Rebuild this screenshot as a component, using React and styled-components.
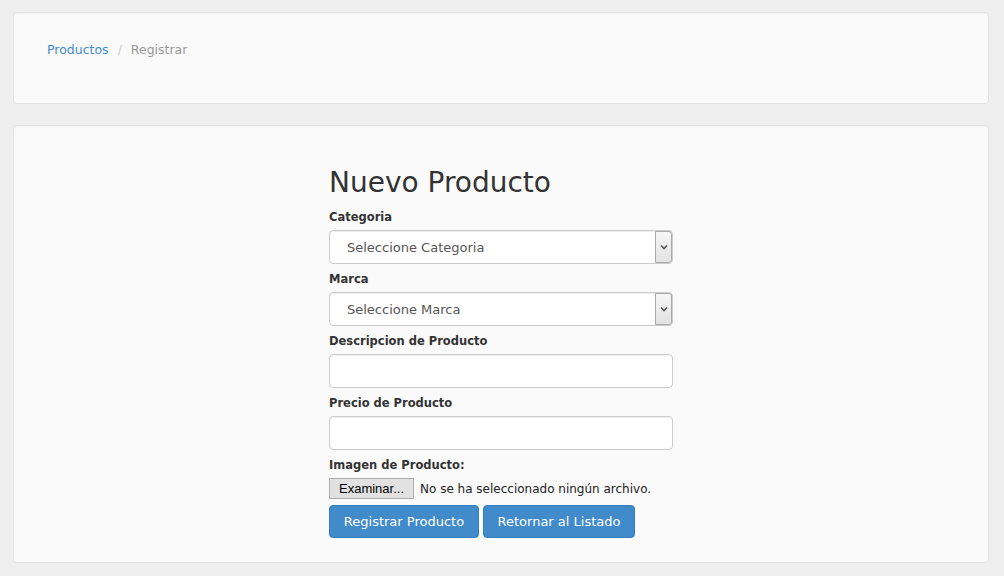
import React from "react";
import styled, { createGlobalStyle } from "styled-components";

const GlobalStyle = createGlobalStyle`
  html, body {
    margin: 0;
    padding: 0;
    background: #efefef;
  }
  body {
    font-family: "Comic Sans MS", "DejaVu Sans", sans-serif;
    font-size: 14px;
    color: #333;
  }
  * { box-sizing: border-box; }
`;

const Page = styled.div`
  padding: 12px 15px 12px 13px;
  display: flex;
  flex-direction: column;
  gap: 21px;
`;

const Well = styled.div`
  background: #fafafa;
  border: 1px solid #e3e3e3;
  border-radius: 4px;
  box-shadow: inset 0 1px 1px rgba(0, 0, 0, 0.03);
  padding: ${(p) => p.$pad};
`;

const Breadcrumb = styled.ol`
  list-style: none;
  margin: 0;
  padding: 0 14px;
  display: flex;
  line-height: 20px;
  font-size: 12.5px;
`;

const Crumb = styled.li`
  color: ${(p) => (p.$active ? "#999" : "#428bca")};
  &:not(:first-child)::before {
    content: "/";
    color: #ccc;
    padding: 0 9px 0 9px;
  }
`;

const FormColumn = styled.form`
  width: 344px;
  margin: 0 auto;
`;

const Heading = styled.h1`
  font-size: 28px;
  font-weight: 400;
  line-height: 34px;
  margin: 0 0 7px;
  color: #333;
`;

const Group = styled.div`
  margin-bottom: 5px;
`;

const Label = styled.label`
  display: block;
  font-weight: 700;
  font-size: 11.5px;
  line-height: 20px;
  margin-bottom: 3px;
  color: #333;
`;

const SelectWrap = styled.div`
  position: relative;
  height: 34px;
`;

const Select = styled.select`
  appearance: none;
  width: 100%;
  height: 34px;
  padding: 0 30px 0 17px;
  font-family: inherit;
  font-size: 13px;
  color: #555;
  background: #fff;
  border: 1px solid #ccc;
  border-radius: 4px;
  box-shadow: inset 0 1px 1px rgba(0, 0, 0, 0.075);
`;

const Arrow = styled.span`
  position: absolute;
  top: 1px;
  right: 1px;
  width: 17px;
  height: 32px;
  border: 1px solid #a9a9a9;
  border-radius: 0 3px 3px 0;
  background: linear-gradient(#f6f6f6, #e2e2e2);
  display: flex;
  align-items: center;
  justify-content: center;
  pointer-events: none;
`;

const Input = styled.input`
  width: 100%;
  height: 34px;
  padding: 6px 12px;
  font-family: inherit;
  font-size: 13px;
  color: #555;
  background: #fff;
  border: 1px solid #ccc;
  border-radius: 4px;
  box-shadow: inset 0 1px 1px rgba(0, 0, 0, 0.075);
`;

const FileRow = styled.div`
  display: flex;
  align-items: center;
  gap: 6px;
  height: 21px;
  margin-bottom: 6px;
`;

const FileButton = styled.span`
  display: inline-flex;
  align-items: center;
  justify-content: center;
  width: 85px;
  height: 21px;
  border: 1px solid #adadad;
  background: #e1e1e1;
  font-family: "Liberation Sans", Arial, sans-serif;
  font-size: 13px;
  color: #000;
`;

const FileText = styled.span`
  font-size: 12px;
  color: #222;
`;

const Actions = styled.div`
  display: flex;
  gap: 4px;
`;

const Button = styled.button`
  height: 33px;
  padding: 0 10px;
  font-family: inherit;
  font-size: 13px;
  color: #fff;
  background: #428bca;
  border: 1px solid #357ebd;
  border-radius: 4px;
  width: ${(p) => p.$w}px;
`;

function Chevron() {
  return (
    <svg width="8" height="6" viewBox="0 0 8 6">
      <path d="M1 1.5 L4 4.5 L7 1.5" fill="none" stroke="#555" strokeWidth="1.6" />
    </svg>
  );
}

function SelectField({ label, placeholder }) {
  return (
    <Group>
      <Label>{label}</Label>
      <SelectWrap>
        <Select defaultValue="">
          <option value="">{placeholder}</option>
        </Select>
        <Arrow>
          <Chevron />
        </Arrow>
      </SelectWrap>
    </Group>
  );
}

function TextField({ label }) {
  return (
    <Group>
      <Label>{label}</Label>
      <Input type="text" />
    </Group>
  );
}

export default function App() {
  return (
    <>
      <GlobalStyle />
      <Page>
        <Well $pad="27px 19px 43px">
          <Breadcrumb>
            <Crumb>Productos</Crumb>
            <Crumb $active>Registrar</Crumb>
          </Breadcrumb>
        </Well>
        <Well $pad="40px 19px 24px">
          <FormColumn onSubmit={(e) => e.preventDefault()}>
            <Heading>Nuevo Producto</Heading>
            <SelectField label="Categoria" placeholder="Seleccione Categoria" />
            <SelectField label="Marca" placeholder="Seleccione Marca" />
            <TextField label="Descripcion de Producto" />
            <TextField label="Precio de Producto" />
            <Label>Imagen de Producto:</Label>
            <FileRow>
              <FileButton>Examinar...</FileButton>
              <FileText>No se ha seleccionado ningún archivo.</FileText>
            </FileRow>
            <Actions>
              <Button $w={150}>Registrar Producto</Button>
              <Button $w={152}>Retornar al Listado</Button>
            </Actions>
          </FormColumn>
        </Well>
      </Page>
    </>
  );
}
